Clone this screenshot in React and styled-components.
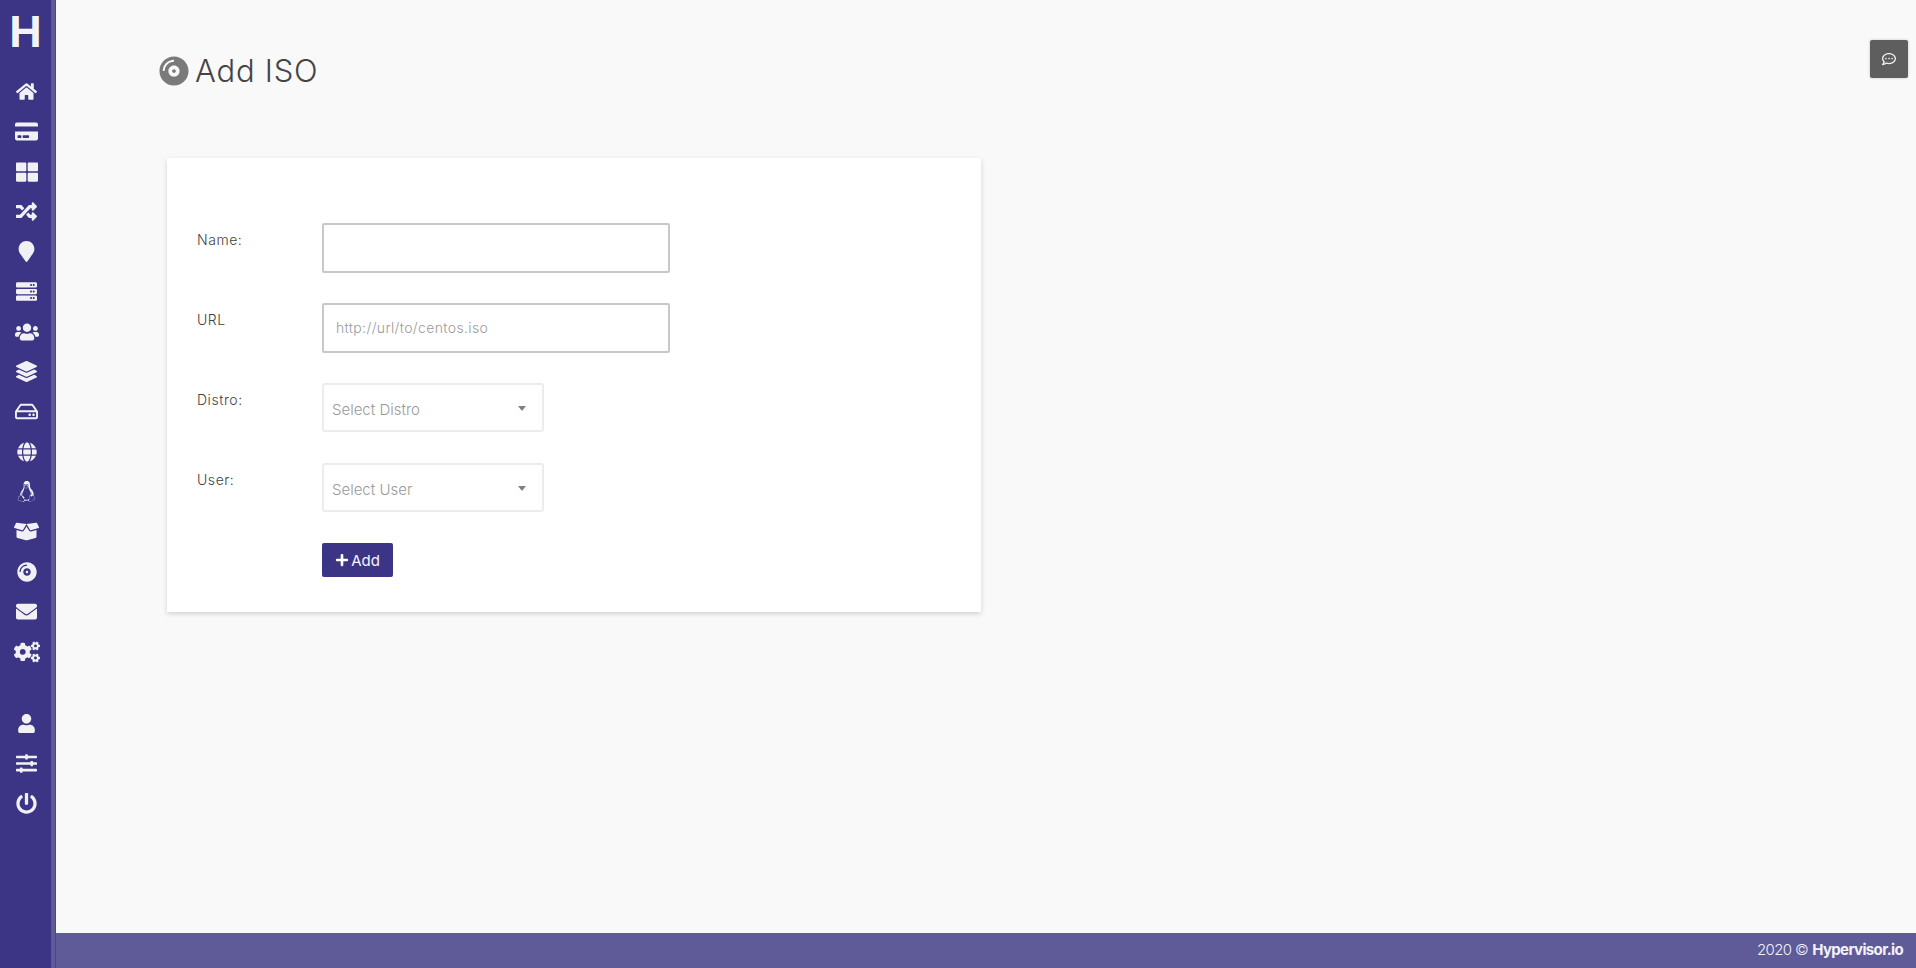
import React from 'react';
import styled, { createGlobalStyle } from 'styled-components';
import { FaHome, FaCreditCard, FaThLarge, FaRandom, FaMapMarker, FaServer, FaUsers, FaLayerGroup, FaRegHdd, FaGlobe, FaLinux, FaBoxOpen, FaCompactDisc, FaEnvelope, FaCogs, FaUser, FaSlidersH, FaPowerOff, FaPlus, FaRegCommentDots } from 'react-icons/fa';

const Global = createGlobalStyle`
  html, body { margin: 0; height: 100%; background: #f9f9f9; }
  body { font-family: Inter, "Open Sans", sans-serif; overflow: hidden; }
`;
const Shell = styled.div`display: flex; height: 968px; width: 1916px; position: relative;`;
const Sidebar = styled.nav`
  width: 51px; flex: none; background: #3c3585; display: flex; flex-direction: column; align-items: center;
  border-right: 4px solid #5f5a98; box-shadow: 1px 0 0 #4d4a70; box-sizing: content-box;
`;
const Logo = styled.div`
  height: 72px; width: 100%; box-sizing: border-box; padding-top: 10px; text-align: center; color: #f4f4f8;
  font: 700 45px/44px "Liberation Sans", sans-serif;
`;
const NavGroup = styled.div`display: flex; flex-direction: column; margin-bottom: ${p => p.$after || 0}px;`;
const NavItem = styled.a`
  width: 51px; height: 40px; box-sizing: border-box; padding: 0 0 1px 2px; display: flex; align-items: center; justify-content: center; color: #f1f1f5; font-size: ${p => p.$size || 21}px;
`;
const Main = styled.div`flex: 1; min-width: 0; margin-left: 1px; display: flex; flex-direction: column;`;
const Content = styled.main`flex: 1; padding: 55.5px 0 0 103px;`;
const Title = styled.h1`
  margin: 0; display: flex; align-items: center; gap: 6px; height: 30px; font-size: 31px; font-weight: 300; color: #444;
  letter-spacing: 0.75px;
  svg { color: #7a7a7a; font-size: 30px; }
`;
const Card = styled.section`
  width: 814px; height: 454px; box-sizing: border-box; margin: 72.5px 0 0 8px; background: #fff; padding: 65px 30px 0;
  box-shadow: 0 2px 5px rgba(0,0,0,.16); display: flex; flex-direction: column;
`;
const Row = styled.div`display: flex; height: 50px; margin-bottom: 30px;`;
const Label = styled.label`width: 125px; flex: none; font-size: 14px; font-weight: 300; color: #3f3f3f; padding-top: 8px; letter-spacing: .55px;`;
const TextInput = styled.input`
  width: 348px; height: 50px; box-sizing: border-box; border: 2px solid #c8c8c8; border-radius: 2px; padding: 0 12px 2px; background: #fff;
  font: 300 14px Inter, sans-serif; letter-spacing: .35px; color: #444;
  &::placeholder { color: #9a9a9a; opacity: 1; }
`;
const SelectBox = styled.div`
  width: 222px; height: 49px; box-sizing: border-box; border: 2px solid #ececec; border-radius: 3px; padding: 15px 8px 0; display: flex; justify-content: space-between;
  font-size: 15px; font-weight: 300; color: #9a9a9a; line-height: 20px;
`;
const Caret = styled.span`
  width: 0; height: 0; border: 4px solid transparent; border-top: 5px solid #808080; border-bottom: 0; margin: 6px 8px 0 0;
`;
const AddButton = styled.button`
  width: 71px; height: 34px; margin: 0 0 0 125px; padding: 0; border: 0; border-radius: 2px; background: #3c3585; color: #f4f4ff;
  font: 400 15px Inter, sans-serif; display: flex; align-items: center; justify-content: center; gap: 2px;
  svg { font-size: 14px; color: #fff; }
`;
const Footer = styled.footer`
  height: 35px; box-sizing: border-box; padding: 0 13px 2px 0; flex: none; background: #5f5a98; color: #f2f2fa; font-size: 15px; font-weight: 300; display: flex; align-items: center; justify-content: flex-end;
  letter-spacing: -.6px;
  b { font-weight: 700; margin-left: 4px; letter-spacing: -.65px; }
`;
const ChatButton = styled.button`
  position: absolute; top: 40px; right: 8px; width: 38px; height: 38px; padding: 0; border: 0; border-radius: 2px; background: #5e5e5e; color: #f2f2f2; box-shadow: 0 0 3px rgba(0,0,0,.2);
  display: flex; align-items: center; justify-content: center; font-size: 14px;
`;

const top = [[FaHome,21],[FaCreditCard,23],[FaThLarge,22],[FaRandom,21],[FaMapMarker,21],[FaServer,21],[FaUsers,24],[FaLayerGroup,21],[FaRegHdd,23],[FaGlobe,20],[FaLinux,21],[FaBoxOpen,25],[FaCompactDisc,20],[FaEnvelope,21],[FaCogs,26]];
const bottom = [[FaUser,19],[FaSlidersH,21],[FaPowerOff,21]];

export default function App() {
  return (
    <Shell>
      <Global />
      <Sidebar>
        <Logo>H</Logo>
        <NavGroup $after={32}>{top.map(([I, s], i) => <NavItem key={i} $size={s}><I /></NavItem>)}</NavGroup>
        <NavGroup>{bottom.map(([I, s], i) => <NavItem key={i} $size={s}><I /></NavItem>)}</NavGroup>
      </Sidebar>
      <Main>
        <Content>
          <Title><FaCompactDisc />Add ISO</Title>
          <Card>
            <Row><Label>Name:</Label><TextInput /></Row>
            <Row><Label>URL</Label><TextInput placeholder="http://url/to/centos.iso" /></Row>
            <Row><Label>Distro:</Label><SelectBox>Select Distro<Caret /></SelectBox></Row>
            <Row><Label>User:</Label><SelectBox>Select User<Caret /></SelectBox></Row>
            <AddButton><FaPlus />Add</AddButton>
          </Card>
        </Content>
        <Footer>2020 © <b>Hypervisor.io</b></Footer>
      </Main>
      <ChatButton><FaRegCommentDots /></ChatButton>
    </Shell>
  );
}
